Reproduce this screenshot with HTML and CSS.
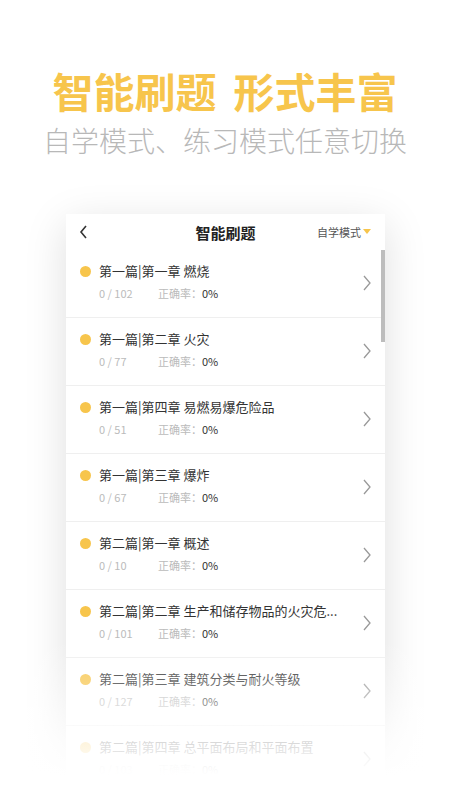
FILE: index.html
```html
<!DOCTYPE html>
<html lang="zh-CN">
<head>
    <meta charset="UTF-8" />
    <meta name="viewport" content="width=device-width, initial-scale=1.0"/>
    <title>智能刷题</title>
    <link rel="stylesheet" href="styles.css">
</head>
<body>

<!-- 顶部宣传语 -->
<div class="hero">
    <h1><span>智能刷题</span><span>形式丰富</span></h1>
    <p>自学模式、练习模式任意切换</p>
</div>

<!-- 手机界面 -->
<div class="phone">
    <div class="topbar">
        <svg class="back" width="10" height="14" viewBox="0 0 10 14">
            <path d="M7 1 L2 7 L7 13" fill="none" stroke="#333" stroke-width="1.6"/>
        </svg>
        <div class="topbar-title">智能刷题</div>
        <div class="mode">自学模式<span class="tri"></span></div>
    </div>

    <div class="list">
        <div class="row">
            <div class="row-main">
                <div class="row-title"><span class="dot"></span>第一篇|第一章 燃烧</div>
                <div class="row-sub"><span class="count">0 / 102</span><span class="rate">正确率：<b>0%</b></span></div>
            </div>
            <svg class="arrow" width="10" height="16" viewBox="0 0 10 16"><path d="M2 1 L8 8 L2 15" fill="none" stroke="#999" stroke-width="1.3"/></svg>
        </div>
        <div class="row">
            <div class="row-main">
                <div class="row-title"><span class="dot"></span>第一篇|第二章 火灾</div>
                <div class="row-sub"><span class="count">0 / 77</span><span class="rate">正确率：<b>0%</b></span></div>
            </div>
            <svg class="arrow" width="10" height="16" viewBox="0 0 10 16"><path d="M2 1 L8 8 L2 15" fill="none" stroke="#999" stroke-width="1.3"/></svg>
        </div>
        <div class="row">
            <div class="row-main">
                <div class="row-title"><span class="dot"></span>第一篇|第四章 易燃易爆危险品</div>
                <div class="row-sub"><span class="count">0 / 51</span><span class="rate">正确率：<b>0%</b></span></div>
            </div>
            <svg class="arrow" width="10" height="16" viewBox="0 0 10 16"><path d="M2 1 L8 8 L2 15" fill="none" stroke="#999" stroke-width="1.3"/></svg>
        </div>
        <div class="row">
            <div class="row-main">
                <div class="row-title"><span class="dot"></span>第一篇|第三章 爆炸</div>
                <div class="row-sub"><span class="count">0 / 67</span><span class="rate">正确率：<b>0%</b></span></div>
            </div>
            <svg class="arrow" width="10" height="16" viewBox="0 0 10 16"><path d="M2 1 L8 8 L2 15" fill="none" stroke="#999" stroke-width="1.3"/></svg>
        </div>
        <div class="row">
            <div class="row-main">
                <div class="row-title"><span class="dot"></span>第二篇|第一章 概述</div>
                <div class="row-sub"><span class="count">0 / 10</span><span class="rate">正确率：<b>0%</b></span></div>
            </div>
            <svg class="arrow" width="10" height="16" viewBox="0 0 10 16"><path d="M2 1 L8 8 L2 15" fill="none" stroke="#999" stroke-width="1.3"/></svg>
        </div>
        <div class="row">
            <div class="row-main">
                <div class="row-title"><span class="dot"></span>第二篇|第二章 生产和储存物品的火灾危...</div>
                <div class="row-sub"><span class="count">0 / 101</span><span class="rate">正确率：<b>0%</b></span></div>
            </div>
            <svg class="arrow" width="10" height="16" viewBox="0 0 10 16"><path d="M2 1 L8 8 L2 15" fill="none" stroke="#999" stroke-width="1.3"/></svg>
        </div>
        <div class="row">
            <div class="row-main">
                <div class="row-title"><span class="dot"></span>第二篇|第三章 建筑分类与耐火等级</div>
                <div class="row-sub"><span class="count">0 / 127</span><span class="rate">正确率：<b>0%</b></span></div>
            </div>
            <svg class="arrow" width="10" height="16" viewBox="0 0 10 16"><path d="M2 1 L8 8 L2 15" fill="none" stroke="#999" stroke-width="1.3"/></svg>
        </div>
        <div class="row">
            <div class="row-main">
                <div class="row-title"><span class="dot"></span>第二篇|第四章 总平面布局和平面布置</div>
                <div class="row-sub"><span class="count">0 / 103</span><span class="rate">正确率：<b>0%</b></span></div>
            </div>
            <svg class="arrow" width="10" height="16" viewBox="0 0 10 16"><path d="M2 1 L8 8 L2 15" fill="none" stroke="#999" stroke-width="1.3"/></svg>
        </div>

        <!-- 滚动条 -->
        <div class="scrollbar"></div>
    </div>
</div>

<!-- 底部渐隐 -->
<div class="fade"></div>

</body>
</html>
```

FILE: styles.css
```css
body {
    margin: 0;
    padding: 0;
    font-family: "Noto Sans CJK SC", "Noto Sans", sans-serif;
    background: #fff;
    color: #333;
    width: 450px;
    height: 800px;
    overflow: hidden;
    position: relative;
}

.hero {
    text-align: center;
    padding-top: 62px;
}

.hero h1 {
    margin: 0;
    display: flex;
    justify-content: center;
    gap: 17px;
    font-size: 41px;
    line-height: 56px;
    font-weight: 700;
    color: #F7C54C;
}

.hero p {
    margin: 2px 0 0 0;
    font-size: 28px;
    line-height: 40px;
    font-weight: 300;
    color: #B8B8B8;
}

/* 手机界面卡片 */
.phone {
    position: relative;
    width: 319px;
    height: 586px;
    margin: 54px 0 0 66px;
    background: #fff;
    box-shadow: 0 10px 40px rgba(0,0,0,0.13);
    overflow: hidden;
}

.topbar {
    height: 36px;
    display: flex;
    align-items: center;
    position: relative;
    padding: 0 13px;
}

.back {
    display: block;
}

.topbar-title {
    position: absolute;
    left: 0;
    right: 0;
    text-align: center;
    font-size: 15px;
    font-weight: 700;
    color: #222;
    pointer-events: none;
}

.mode {
    margin-left: auto;
    font-size: 11px;
    color: #555;
    display: flex;
    align-items: center;
    margin-right: 1px;
}

.tri {
    display: inline-block;
    width: 0;
    height: 0;
    border-left: 4px solid transparent;
    border-right: 4px solid transparent;
    border-top: 5px solid #F7C54C;
    margin-left: 2px;
    margin-top: -2px;
}

.list {
    position: relative;
}

.row {
    height: 68px;
    box-sizing: border-box;
    border-bottom: 1px solid #EFEFEF;
    display: flex;
    align-items: center;
    padding: 0 13px 0 14px;
}

.row-main {
    flex: 1;
    margin-top: -5px;
}

.row-title {
    display: flex;
    align-items: center;
    font-size: 13px;
    color: #333;
    line-height: 18px;
}

.dot {
    width: 11px;
    height: 11px;
    border-radius: 50%;
    background: #F7C54C;
    margin-right: 8px;
}

.row-sub {
    margin-top: 6px;
    padding-left: 19px;
    font-size: 11px;
    line-height: 14px;
    color: #BBBBBB;
}

.count {
    display: inline-block;
    width: 59px;
}

.rate b {
    font-weight: 400;
    color: #333;
}

.arrow {
    display: block;
    margin-top: -2px;
}

.scrollbar {
    position: absolute;
    right: 0;
    top: 0;
    width: 4px;
    height: 92px;
    background: #BDBDBD;
}

.fade {
    position: absolute;
    left: 0;
    right: 0;
    top: 640px;
    height: 160px;
    background: linear-gradient(to bottom, rgba(255,255,255,0) 0px, rgba(255,255,255,0.3) 45px, rgba(255,255,255,0.8) 100px, #fff 135px, #fff 160px);
}
```
